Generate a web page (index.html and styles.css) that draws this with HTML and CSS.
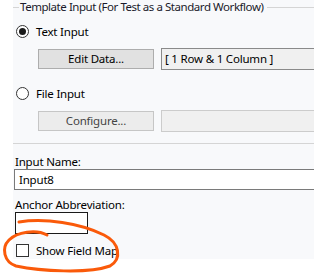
FILE: index.html
```html
<!DOCTYPE html>
<html lang="en">
<head>
    <meta charset="UTF-8">
    <title>Template Input</title>
    <link rel="stylesheet" href="styles.css">
</head>
<body>
    <div class="panel">
        <div class="group-title"><span>Template Input (For Test as a Standard Workflow)</span></div>

        <div class="option">
            <span class="radio checked"></span>
            <span class="option-label">Text Input</span>
        </div>
        <div class="button-row first">
            <div class="btn">Edit Data...</div>
            <div class="field">[ 1 Row &amp; 1 Column ]</div>
        </div>

        <div class="option second">
            <span class="radio"></span>
            <span class="option-label">File Input</span>
        </div>
        <div class="button-row">
            <div class="btn disabled">Configure...</div>
            <div class="field disabled"></div>
        </div>

        <div class="separator"></div>

        <div class="label">Input Name:</div>
        <div class="textbox">Input8</div>

        <div class="label anchor">Anchor Abbreviation:</div>
        <div class="textbox small"></div>

        <div class="check-row">
            <span class="checkbox"></span>
            <span>Show Field Map</span>
        </div>
    </div>

    <!-- hand drawn highlight around the checkbox -->
    <svg class="scribble" width="314" height="274" viewBox="0 0 314 274">
        <path d="M19,222 C45,218 80,223 104,235 C120,243 122,259 110,266 C88,274 40,271 16,266 C4,262 1,248 9,240 C17,232 36,229 47,235"
              fill="none" stroke="#fa5a0a" stroke-width="3" stroke-linecap="round"/>
    </svg>
</body>
</html>
```

FILE: styles.css
```css
body {
    margin: 0;
    background: #fff;
    font-family: "Noto Sans", Arial, sans-serif;
    font-size: 11.5px;
    letter-spacing: -0.2px;
    color: #000;
    position: relative;
    width: 314px;
    height: 274px;
    overflow: hidden;
}

.panel {
    margin-left: 13px;
    width: 301px;
    height: 259px;
    background: #f8f9fb;
    display: flex;
    flex-direction: column;
    overflow: hidden;
}

.group-title {
    display: flex;
    align-items: center;
    height: 14px;
    line-height: 14px;
    color: #1a1a2a;
    white-space: nowrap;
    letter-spacing: -0.45px;
}

.group-title::before {
    content: "";
    width: 6px;
    border-top: 1px solid #d5d5d5;
    margin-right: 1px;
}

.group-title::after {
    content: "";
    flex: 1;
    border-top: 1px solid #d5d5d5;
    margin-left: 4px;
}

.option {
    display: flex;
    align-items: center;
    height: 14px;
    margin-top: 10px;
    padding-left: 3px;
}

.option.second {
    margin-top: 16px;
}

.radio {
    width: 11px;
    height: 11px;
    border: 1px solid #333;
    border-radius: 50%;
    background: #fff;
    display: flex;
    align-items: center;
    justify-content: center;
}

.radio.checked::after {
    content: "";
    width: 7px;
    height: 7px;
    border-radius: 50%;
    background: #1a1a1a;
}

.option-label {
    margin-left: 7px;
}

.button-row {
    display: flex;
    align-items: center;
    height: 22px;
    margin-top: 10px;
    padding-left: 25px;
    gap: 7px;
}

.btn {
    width: 114px;
    height: 18px;
    line-height: 18px;
    text-align: center;
    background: #e1e1e1;
    border: 1px solid #adadad;
}

.btn.disabled {
    background: #ececec;
    border-color: #c6c6c6;
    color: #444;
}

.field {
    flex: 1;
    height: 20px;
    line-height: 20px;
    margin-right: -6px;
    padding-left: 3px;
    background: #f0f0f0;
    border: 1px solid #8a8a8a;
    white-space: nowrap;
}

.field.disabled {
    border-color: #cccccc;
}

.separator {
    margin-top: 11px;
    border-top: 1px solid #d5d5d5;
}

.label {
    margin-top: 11px;
    padding-left: 2px;
    height: 14px;
    line-height: 14px;
}

.label.anchor {
    margin-top: 8px;
}

.textbox {
    height: 19px;
    line-height: 19px;
    margin-left: 1px;
    margin-right: -8px;
    padding-left: 4px;
    background: #fff;
    border: 1px solid #7a7a7a;
}

.textbox.small {
    width: 67px;
    height: 20px;
    margin-left: 2px;
    margin-right: 0;
    border-color: #1a1a1a;
}

.check-row {
    display: flex;
    align-items: center;
    height: 13px;
    margin-top: 10px;
    padding-left: 3px;
    gap: 7px;
}

.checkbox {
    width: 11px;
    height: 11px;
    border: 1px solid #333;
    background: #fff;
}

.scribble {
    position: absolute;
    left: 0;
    top: 0;
}
```
